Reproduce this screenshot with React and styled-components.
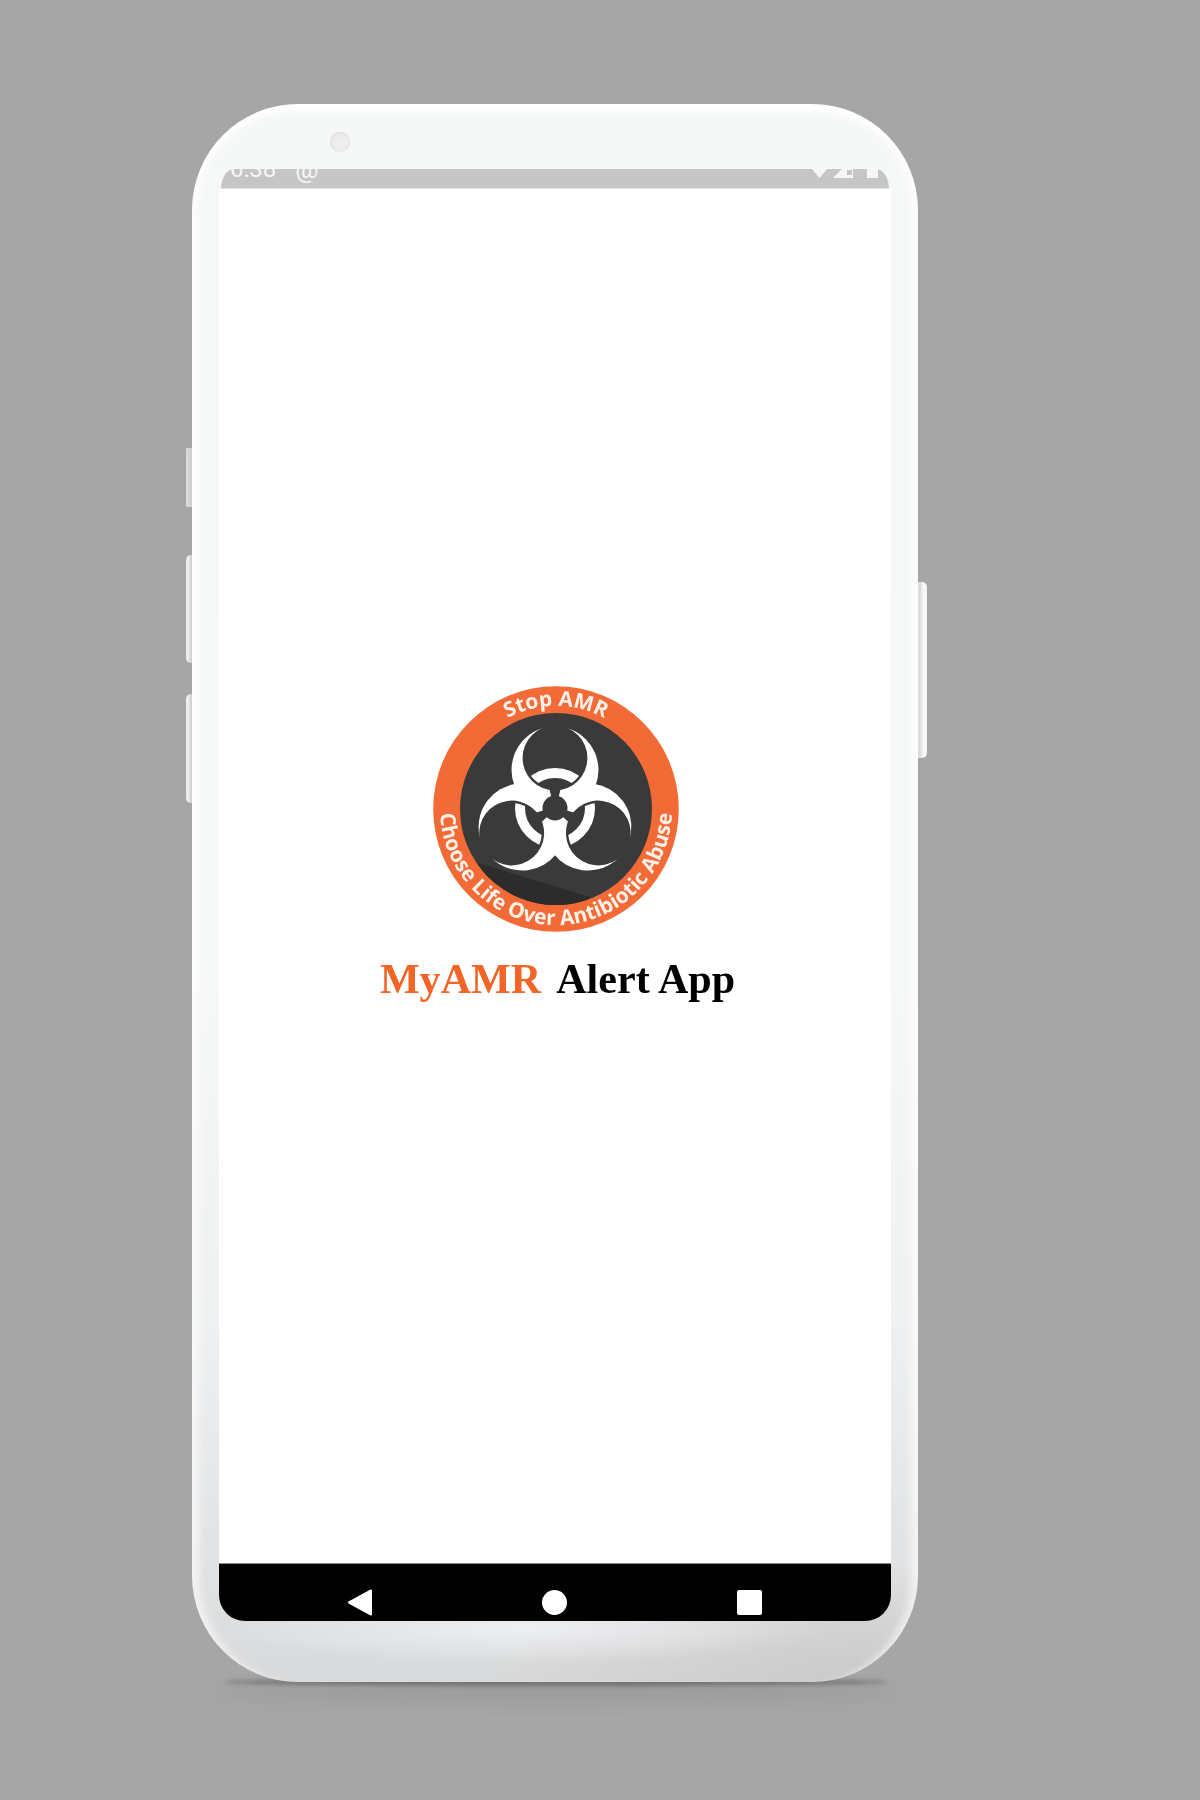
import React from 'react';
import styled, { createGlobalStyle } from 'styled-components';

const GlobalStyle = createGlobalStyle`
  html, body {
    margin: 0;
    padding: 0;
    background: #a6a6a6;
  }
`;

const Stage = styled.div`
  box-sizing: border-box;
  height: 1800px;
  padding: 104px 0 0 192px;
  background: #a6a6a6;
  overflow: hidden;
`;

const PhoneWrap = styled.div`
  position: relative;
  width: 726px;
  height: 1578px;
`;

const GroundShadow = styled.div`
  position: absolute;
  left: 32px;
  right: 30px;
  bottom: -4px;
  height: 8px;
  border-radius: 50%;
  background: rgba(0, 0, 0, 0.3);
  filter: blur(2px);
  box-shadow: 0 10px 18px 8px rgba(0, 0, 0, 0.06);
`;

const SideKey = styled.div`
  position: absolute;
  top: ${(p) => p.$top}px;
  height: ${(p) => p.$height}px;
  ${(p) => (p.$right ? 'right: -9px;' : 'left: -6px;')}
  width: 20px;
  box-sizing: border-box;
  border-radius: ${(p) => (p.$square ? '1px' : '5px')};
  background: ${(p) => {
    if (p.$right) return 'linear-gradient(270deg, #f2f2f2 0, #fafafa 3px, #dcdcdc 7px, #e8e8e8 100%)';
    if (p.$square) return 'linear-gradient(90deg, #dedede 0, #d4d4d4 3px, #cfcfcf 6px, #e0e0e0 100%)';
    return 'linear-gradient(90deg, #e8e8e8 0, #f2f2f2 2px, #d0d0d0 5px, #e0e0e0 100%)';
  }};
`;

const Phone = styled.div`
  position: relative;
  box-sizing: border-box;
  width: 100%;
  height: 100%;
  display: flex;
  flex-direction: column;
  padding: 0 27px 61px;
  border-radius: 106px;
  background:
    radial-gradient(ellipse 300px 34px at 46% 1525px, rgba(240, 241, 243, 0.9), rgba(240, 241, 243, 0)),
    radial-gradient(ellipse 400px 120px at 96% 100%, rgba(195, 195, 195, 0.75), rgba(195, 195, 195, 0)),
    linear-gradient(180deg, #f6f8f8 0, #f7f8f8 55%, #eff0f1 77%, #e1e2e3 93%, #d8d9da 100%);
  box-shadow:
    inset 0 11px 6px -4px #fff,
    inset 13px 0 8px -6px rgba(255, 255, 255, 0.6),
    inset -13px 0 8px -6px rgba(255, 255, 255, 0.6);
`;

const TopBezel = styled.div`
  box-sizing: border-box;
  flex: none;
  height: 65px;
  padding: 28px 0 0 111px;
`;

const Camera = styled.div`
  width: 20px;
  height: 20px;
  border-radius: 50%;
  background: radial-gradient(circle at 55% 55%, #f0f0f0 0, #ebebeb 55%, #d8d8d8 100%);
  box-shadow: inset 0 0 1px #c4c4c4;
`;

const StatusBar = styled.div`
  box-sizing: border-box;
  flex: none;
  height: 20px;
  margin: 0 2px;
  padding: 0 11px 10px 9px;
  display: flex;
  align-items: flex-end;
  justify-content: space-between;
  overflow: hidden;
  background: #c6c6c6;
  border-bottom: 1px solid #e4e4e4;
  border-radius: 13px 13px 0 0 / 20px 20px 0 0;
  color: #f6f6f6;
  font-family: Roboto, sans-serif;
  font-size: 24px;
  line-height: 17px;
`;

const StatusGroup = styled.div`
  display: flex;
  align-items: flex-end;
  gap: ${(p) => p.$gap}px;
`;

const AtSign = styled.span`
  font-size: 26px;
`;

const StatusGlyphs = styled.svg`
  display: block;
  width: 68px;
  height: 20px;
`;

const Screen = styled.main`
  flex: 1;
  display: flex;
  flex-direction: column;
  align-items: center;
  padding-top: 495px;
  background: #fff;
`;

const Logo = styled.svg`
  display: block;
  width: 250px;
  height: 250px;
  margin-left: 2px;
  filter: blur(0.45px);
`;

const BadgeText = styled.text`
  fill: #fbf1ea;
  font-family: "Open Sans", sans-serif;
  font-weight: 700;
  font-size: ${(p) => p.$size}px;
`;

const Title = styled.h1`
  display: flex;
  gap: 15px;
  margin: 21px 0 0 5px;
  font-family: "Liberation Serif", serif;
  font-size: 42.1px;
  font-weight: 700;
  line-height: 48px;
  color: #000;
  filter: blur(0.4px);
`;

const Accent = styled.span`
  color: #f26526;
`;

const NavBar = styled.nav`
  box-sizing: border-box;
  flex: none;
  height: 58px;
  padding: 26px 129px 0;
  display: flex;
  align-items: flex-start;
  justify-content: space-between;
  background: #000;
  border-top: 1px solid #8a8a8a;
  border-radius: 0 0 26px 26px;
`;

const NavBack = styled.svg`
  display: block;
  width: 24px;
  height: 27px;
  margin-top: -1px;
`;

const NavHome = styled.div`
  width: 25px;
  height: 25px;
  border-radius: 50%;
  background: #fff;
`;

const NavRecent = styled.div`
  width: 25px;
  height: 25px;
  border-radius: 2px;
  background: #fff;
`;

const armAngles = [0, 120, 240];

function Biohazard() {
  return (
    <g transform="translate(-1 -1)">
      <defs>
        <clipPath id="ringHoles">
          {armAngles.map((a) => (
            <circle key={a} cx="0" cy="-50" r="30" transform={`rotate(${a})`} />
          ))}
        </clipPath>
        <mask id="bioMask" maskUnits="userSpaceOnUse" x="-100" y="-100" width="200" height="200">
          {armAngles.map((a) => (
            <circle key={a} cx="0" cy="-38" r="43.5" fill="#fff" transform={`rotate(${a})`} />
          ))}
          {armAngles.map((a) => (
            <g key={a} transform={`rotate(${a})`}>
              <circle cx="0" cy="-50" r="32.4" fill="#000" />
              <path d="M-6 -21 L6 -21 L3 -8 L-3 -8 Z" fill="#000" />
            </g>
          ))}
          <circle cx="0" cy="0" r="12.5" fill="#000" />
          <circle cx="0" cy="0" r="35" fill="none" stroke="#fff" strokeWidth="10" clipPath="url(#ringHoles)" />
        </mask>
      </defs>
      <rect x="-100" y="-100" width="200" height="200" fill="#fff" mask="url(#bioMask)" />
    </g>
  );
}

function BadgeLogo() {
  return (
    <Logo viewBox="-125 -125 250 250" aria-label="Stop AMR logo">
      <defs>
        <clipPath id="darkDisc">
          <circle cx="0" cy="0" r="96" />
        </clipPath>
        <path id="topArc" d="M-103 0 A103 103 0 0 1 103 0" />
        <path id="bottomArc" d="M-116 0 A116 116 0 0 0 116 0" />
      </defs>
      <circle cx="0" cy="0" r="122.8" fill="#f26a35" />
      <circle cx="0" cy="0" r="96" fill="#3a3a3a" />
      <path d="M-78 54 L34 88 L20 110 L-90 100 Z" fill="#2c2c2c" clipPath="url(#darkDisc)" />
      <Biohazard />
      <BadgeText $size={21} textAnchor="middle">
        <textPath href="#topArc" startOffset="50%">Stop AMR</textPath>
      </BadgeText>
      <BadgeText $size={21} textAnchor="middle">
        <textPath href="#bottomArc" startOffset="50%">Choose Life Over Antibiotic Abuse</textPath>
      </BadgeText>
    </Logo>
  );
}

function StatusIcons() {
  return (
    <StatusGlyphs viewBox="0 0 68 20">
      <path d="M2 11 H17 L9.5 20 Z" fill="#f6f6f6" />
      <path d="M23 20 L43 0 V20 Z" fill="#f6f6f6" />
      <rect x="37" y="12" width="5" height="5" fill="#c6c6c6" />
      <rect x="57" y="0" width="11" height="20" fill="#f6f6f6" />
    </StatusGlyphs>
  );
}

export default function App() {
  return (
    <Stage>
      <GlobalStyle />
      <PhoneWrap>
        <GroundShadow />
        <SideKey $top={344} $height={59} $square />
        <SideKey $top={451} $height={108} />
        <SideKey $top={590} $height={109} />
        <SideKey $right $top={478} $height={176} />
        <Phone>
          <TopBezel>
            <Camera />
          </TopBezel>
          <StatusBar>
            <StatusGroup $gap={19}>
              <span>6:38</span>
              <AtSign>@</AtSign>
            </StatusGroup>
            <StatusIcons />
          </StatusBar>
          <Screen>
            <BadgeLogo />
            <Title>
              <Accent>MyAMR</Accent>
              <span>Alert App</span>
            </Title>
          </Screen>
          <NavBar>
            <NavBack viewBox="0 0 24 27">
              <path d="M22.5 0.5 Q24 0 24 2 V25 Q24 27 22.5 26.5 L0.5 14.5 Q-0.5 13.5 0.5 12.5 Z" fill="#fff" />
            </NavBack>
            <NavHome />
            <NavRecent />
          </NavBar>
        </Phone>
      </PhoneWrap>
    </Stage>
  );
}
